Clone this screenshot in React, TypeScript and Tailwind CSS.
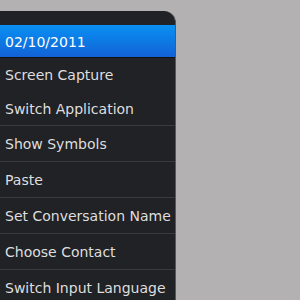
export default function App() {
  const rows = ["Show Symbols", "Paste", "Set Conversation Name", "Choose Contact", "Switch Input Language"];
  return (
    <div className="w-[300px] h-[300px] overflow-hidden bg-[#b3b1b1] pt-[11px]" style={{ fontFamily: '"DejaVu Sans", sans-serif' }}>
      <div className="w-[176px] h-[300px] bg-[#202226] rounded-tr-[12px] border-r border-[#55575a] text-[14px] text-[#dedede] overflow-hidden">
        <div className="h-[14px]" />
        <div className="h-[33px] flex items-center pl-[5px] pt-[2px] text-white bg-gradient-to-b from-[#0a90f2] to-[#1262d6] border-b border-[#101216]">02/10/2011</div>
        <div className="h-[33px] flex items-center pl-[5px] pt-[2px]">Screen Capture</div>
        <div className="h-[34px] flex items-center pl-[5px] pt-[2px]">Switch Application</div>
        {rows.map((r) => (
          <div key={r} className="h-[36px] flex items-center pl-[5px] pt-[2px] border-t border-[#373a3f]">{r}</div>
        ))}
      </div>
    </div>
  );
}
